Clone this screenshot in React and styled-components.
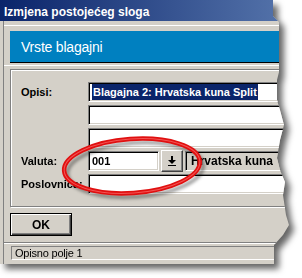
import styled, { createGlobalStyle } from 'styled-components'

const GlobalStyle = createGlobalStyle`
  html, body {
    margin: 0;
    padding: 0;
    background: #ffffff;
  }
  body {
    font-family: "Liberation Sans", Arial, sans-serif;
  }
`

const Stage = styled.div`
  position: relative;
  width: 302px;
  height: 278px;
  overflow: hidden;
  background: #ffffff;
`

const ShadowWrap = styled.div`
  width: 300px;
  filter: drop-shadow(5px 5px 3px rgba(0, 0, 0, 0.6));
`

const Window = styled.div`
  width: 300px;
  height: 264px;
  background: #d4d0c8;
  display: flex;
  flex-direction: column;
  clip-path: polygon(
    0 0, 273px 0, 273px 16px, 279px 22px, 279px 72px, 277px 80px,
    277px 100px, 280px 110px, 284px 125px, 280px 140px, 277px 158px,
    280px 170px, 285px 182px, 283px 195px, 286px 215px, 289px 225px,
    283px 235px, 274px 245px, 274px 264px, 0 264px
  );
`

const TitleBar = styled.div`
  height: 21px;
  box-sizing: border-box;
  padding: 3px 0 0 4px;
  display: flex;
  align-items: center;
  background: linear-gradient(to right, #0a246a 0px, #5574ab 290px);
  color: #ffffff;
  font-size: 12px;
  font-weight: bold;
`

const Body = styled.div`
  flex: 1;
  margin-left: 3px;
  border-left: 1px solid #808080;
  display: flex;
  flex-direction: column;
`

const HeaderArea = styled.div`
  margin-top: 4px;
  border-top: 1px solid #ffffff;
  border-bottom: 1px solid #ffffff;
  padding: 5px 0 2px 6px;
`

const Banner = styled.div`
  height: 31px;
  background: #0080c0;
  border-bottom: 1px solid #000000;
  display: flex;
  align-items: center;
  padding-left: 11px;
  color: #ffffff;
  font-size: 14px;
  letter-spacing: -0.2px;
`

const GroupBox = styled.div`
  margin: 3px 0 0 6px;
  height: 138px;
  box-sizing: border-box;
  border: 1px solid #808080;
  box-shadow: inset 1px 1px 0 #ffffff, 1px 1px 0 #ffffff;
  padding: 12px 0 0 10px;
  display: flex;
  flex-direction: column;
  gap: 3px;
`

const Row = styled.div`
  display: flex;
  align-items: center;
  height: 20px;
`

const Label = styled.div`
  width: 67px;
  flex: none;
  font-size: 11px;
  font-weight: bold;
  color: #000000;
  white-space: nowrap;
`

const Field = styled.div`
  height: 20px;
  box-sizing: border-box;
  background: ${p => (p.$gray ? '#d4d0c8' : '#ffffff')};
  border-top: 1px solid #808080;
  border-left: 1px solid #808080;
  border-bottom: 1px solid #ffffff;
  border-right: 1px solid #ffffff;
  box-shadow: inset 1px 1px 0 #000000, inset -1px -1px 0 #d4d0c8;
  display: flex;
  align-items: center;
  padding-left: ${p => (p.$gray ? '5px' : '3px')};
  font-size: ${p => (p.$gray ? '12px' : '11px')};
  font-weight: bold;
  color: #000000;
  white-space: nowrap;
  overflow: hidden;
  ${p => (p.$width ? `width: ${p.$width}px; flex: none;` : 'flex: 1;')}
`

const Selected = styled.span`
  background: #0a246a;
  color: #ffffff;
  padding: 2px 1px 2px 1px;
`

const DropButton = styled.div`
  width: 22px;
  height: 22px;
  margin: 0 2px;
  box-sizing: border-box;
  flex: none;
  background: #d4d0c8;
  border-top: 1px solid #ffffff;
  border-left: 1px solid #ffffff;
  border-right: 1px solid #404040;
  border-bottom: 1px solid #404040;
  box-shadow: inset -1px -1px 0 #808080;
  display: flex;
  align-items: center;
  justify-content: center;
`

const Footer = styled.div`
  padding: 6px 0 0 6px;
`

const OkButton = styled.div`
  width: 62px;
  height: 23px;
  box-sizing: border-box;
  border: 1px solid #000000;
  box-shadow: inset 1px 1px 0 #ffffff, inset -1px -1px 0 #404040, inset -2px -2px 0 #808080;
  display: flex;
  align-items: center;
  justify-content: center;
  font-size: 12px;
  font-weight: bold;
  color: #000000;
`

const Separator = styled.div`
  margin-top: 6px;
  border-top: 1px solid #808080;
  border-bottom: 1px solid #ffffff;
`

const StatusBar = styled.div`
  margin: 2px 0 0 7px;
  height: 14px;
  width: 268px;
  box-sizing: border-box;
  border-top: 1px solid #808080;
  border-left: 1px solid #808080;
  border-bottom: 1px solid #ffffff;
  border-right: 1px solid #ffffff;
  display: flex;
  align-items: center;
  padding-left: 3px;
  font-size: 11px;
  letter-spacing: -0.2px;
  color: #000000;
`

const Annotation = styled.svg`
  position: absolute;
  left: 0;
  top: 0;
  pointer-events: none;
`

const DownIcon = () => (
  <svg width="8" height="10" viewBox="0 0 8 10">
    <rect x="3" y="0" width="2" height="4" fill="#000" />
    <polygon points="0,4 8,4 4,8" fill="#000" />
    <rect x="0" y="9" width="8" height="1" fill="#000" />
  </svg>
)

const App = () => {
  return (
    <Stage>
      <GlobalStyle />
      <ShadowWrap>
        <Window>
          <TitleBar>Izmjena postojećeg sloga</TitleBar>
          <Body>
            <HeaderArea>
              <Banner>Vrste blagajni</Banner>
            </HeaderArea>
            <GroupBox>
              <Row>
                <Label>Opisi:</Label>
                <Field>
                  <Selected>Blagajna 2: Hrvatska kuna Split</Selected>
                </Field>
              </Row>
              <Row>
                <Label />
                <Field />
              </Row>
              <Row>
                <Label />
                <Field />
              </Row>
              <Row>
                <Label>Valuta:</Label>
                <Field $width={71}>001</Field>
                <DropButton>
                  <DownIcon />
                </DropButton>
                <Field $gray>Hrvatska kuna</Field>
              </Row>
              <Row>
                <Label>Poslovnica:</Label>
                <Field />
              </Row>
            </GroupBox>
            <Footer>
              <OkButton>OK</OkButton>
            </Footer>
            <Separator />
            <StatusBar>Opisno polje 1</StatusBar>
          </Body>
        </Window>
      </ShadowWrap>
      <Annotation width="302" height="278" viewBox="0 0 302 278">
        <defs>
          <filter id="blur" x="-20%" y="-20%" width="140%" height="140%">
            <feGaussianBlur stdDeviation="1.5" />
          </filter>
        </defs>
        <g transform="rotate(-4 132 166)">
          <ellipse cx="135" cy="170" rx="68" ry="27" fill="none" stroke="rgba(0,0,0,0.35)" strokeWidth="4" filter="url(#blur)" />
          <ellipse cx="132" cy="166" rx="68" ry="27" fill="none" stroke="#e01010" strokeWidth="4.5" />
          <ellipse cx="132" cy="166" rx="68" ry="27" fill="none" stroke="#ff8080" strokeWidth="1" opacity="0.6" />
        </g>
      </Annotation>
    </Stage>
  )
}

export default App
